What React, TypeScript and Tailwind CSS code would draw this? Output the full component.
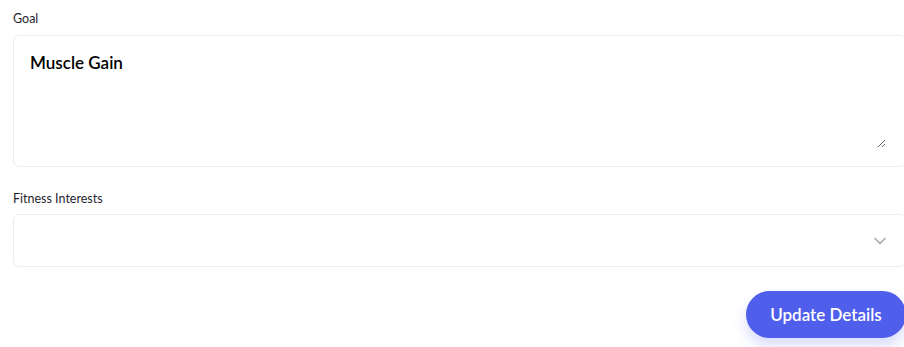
import { ChevronDown } from "lucide-react";

export default function App() {
  return (
    <div className="w-[904px] h-[347px] overflow-hidden bg-white" style={{ fontFamily: "Lato, 'Noto Sans', sans-serif" }}>
      <div className="w-[893px] pl-[13px] pt-[12px] box-content">
        {/* GOAL */}
        <label className="block text-[12.5px] leading-[14px] text-[#1f1f2e]">Goal</label>
        <div className="mt-[9px] h-[132px] w-full rounded-[6px] border border-[#ececec] bg-white pl-[16px] pr-[19px] pt-[14px]">
          <textarea
            defaultValue="Muscle Gain"
            className="block h-[98px] w-full resize-y bg-transparent text-[17px] font-semibold text-black outline-none"
          />
        </div>

        {/* FITNESS INTERESTS */}
        <label className="mt-[25px] block text-[12.5px] leading-[14px] text-[#1f1f2e]">Fitness Interests</label>
        <div className="mt-[8px] flex h-[53px] w-full items-center justify-end rounded-[6px] border border-[#ececec] bg-white pr-[15px]">
          <ChevronDown className="h-[20px] w-[20px] text-[#aaaaaa]" strokeWidth={2} />
        </div>

        {/* BUTTON */}
        <div className="mt-[24px] flex justify-end">
          <button className="h-[47px] w-[160px] rounded-full bg-[#4f5eeb] text-[17px] font-semibold text-white shadow-[0_8px_14px_rgba(79,94,235,0.22)]">
            Update Details
          </button>
        </div>
      </div>
    </div>
  );
}
